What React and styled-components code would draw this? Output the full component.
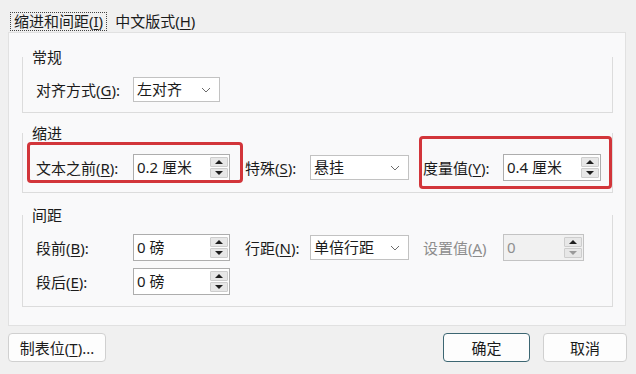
import React from 'react';
import styled, { createGlobalStyle } from 'styled-components';

const GlobalStyle = createGlobalStyle`
  html, body {
    margin: 0;
    padding: 0;
    background: #f0f0f0;
  }
  body {
    width: 636px;
    height: 374px;
    overflow: hidden;
    font-family: "Noto Sans", "Noto Sans CJK SC", sans-serif;
    font-size: 15px;
    color: #1b1b1b;
  }
  u {
    text-underline-offset: 2px;
  }
`;

const Dialog = styled.div`
  display: flex;
  flex-direction: column;
  width: 636px;
  height: 374px;
  box-sizing: border-box;
`;

const TabBar = styled.div`
  display: flex;
  align-items: flex-start;
  height: 32px;
  box-sizing: border-box;
  padding: 12px 0 0 10px;
`;

const Tab = styled.div`
  height: 19px;
  box-sizing: border-box;
  padding: 0 3px;
  margin-right: 4px;
  line-height: 16px;
  border: 1px ${p => (p.$active ? 'dotted #444' : 'solid transparent')};
  white-space: nowrap;
`;

const Panel = styled.div`
  display: flex;
  flex-direction: column;
  margin: 0 10px 0 8px;
  border: 1px solid #e1e1e1;
  background: #f9f9fa;
  padding: 24px 12px 18px 13px;
`;

const Group = styled.section`
  display: flex;
  flex-direction: column;
  margin-top: ${p => p.$top || 0}px;
  border: 1px solid #dcdcdc;
  border-top: none;
  padding-bottom: ${p => p.$bottom}px;
`;

const Legend = styled.div`
  align-self: flex-start;
  margin: -8px 0 0 9px;
  line-height: 16px;
`;

const Row = styled.div`
  display: grid;
  grid-template-columns: 97px 112px 65px 113px 80px 1fr;
  align-items: center;
  margin: ${p => p.$top}px 0 0 13px;
`;

const Label = styled.span`
  white-space: nowrap;
  line-height: 20px;
  color: ${p => (p.$disabled ? '#8d8d8d' : '#1b1b1b')};
`;

const Highlight = styled.div`
  grid-column: span 2;
  display: grid;
  grid-template-columns: ${p => p.$label}px 1fr;
  align-items: center;
  position: relative;

  &::after {
    content: '';
    position: absolute;
    top: ${p => p.$box[0]}px;
    right: ${p => p.$box[1]}px;
    bottom: ${p => p.$box[2]}px;
    left: ${p => p.$box[3]}px;
    border: 3px solid #d2353a;
    border-radius: 4px;
    pointer-events: none;
  }
`;

const SpinBox = styled.div`
  display: flex;
  width: ${p => p.$w}px;
  height: 27px;
  box-sizing: border-box;
  border: 1px solid ${p => (p.$disabled ? '#c3c3c3' : '#adadad')};
  background: ${p => (p.$disabled ? '#f1f1f1' : '#ffffff')};
`;

const SpinValue = styled.span`
  flex: 1;
  padding-left: 3px;
  line-height: 25px;
  color: ${p => (p.$disabled ? '#8f8f8f' : '#1b1b1b')};
  white-space: nowrap;
`;

const Arrows = styled.div`
  display: flex;
  flex-direction: column;
  width: 18px;
  padding: 2px 1px 2px 0;
  gap: 1px;
`;

const ArrowBtn = styled.div`
  flex: 1;
  display: flex;
  align-items: center;
  justify-content: center;
  background: #e7e7e7;
  border: 1px solid #cdcdcd;
  border-radius: 1px;

  &::before {
    content: '';
    width: 0;
    height: 0;
    border-left: 4px solid transparent;
    border-right: 4px solid transparent;
    ${p =>
      p.$down
        ? `border-top: 4px solid ${p.$dim ? '#9a9a9a' : '#1e1e1e'};`
        : `border-bottom: 4px solid #1e1e1e;`}
  }
`;

const SelectBox = styled.div`
  display: flex;
  align-items: center;
  width: ${p => p.$w}px;
  height: 25px;
  box-sizing: border-box;
  border: 1px solid #c2c2c2;
  background: #ffffff;
`;

const SelectValue = styled.span`
  flex: 1;
  padding-left: 3px;
  line-height: 23px;
  white-space: nowrap;
`;

const Chevron = styled.div`
  display: flex;
  align-items: center;
  justify-content: center;
  width: 26px;
  height: 100%;
`;

const Footer = styled.div`
  display: flex;
  justify-content: space-between;
  padding: 7px 9px 0 8px;
`;

const Buttons = styled.div`
  display: flex;
  gap: 13px;
`;

const Button = styled.button`
  width: ${p => p.$w}px;
  height: 29px;
  box-sizing: border-box;
  border: 1px solid ${p => (p.$primary ? '#3c6672' : '#d0d0d0')};
  border-radius: 4px;
  background: #fdfdfd;
  font: inherit;
  color: #1b1b1b;
  line-height: 20px;
  padding: 0;
`;

const Spin = ({ w, value, disabled }) => (
  <SpinBox $w={w} $disabled={disabled}>
    <SpinValue $disabled={disabled}>{value}</SpinValue>
    <Arrows>
      <ArrowBtn />
      <ArrowBtn $down $dim={disabled} />
    </Arrows>
  </SpinBox>
);

const Select = ({ w, value }) => (
  <SelectBox $w={w}>
    <SelectValue>{value}</SelectValue>
    <Chevron>
      <svg width="10" height="6" viewBox="0 0 10 6">
        <path d="M1 1 L5 5 L9 1" fill="none" stroke="#6b6b6b" strokeWidth="1" />
      </svg>
    </Chevron>
  </SelectBox>
);

export default function App() {
  return (
    <Dialog>
      <GlobalStyle />
      <TabBar>
        <Tab $active>
          缩进和间距(<u>I</u>)
        </Tab>
        <Tab>
          中文版式(<u>H</u>)
        </Tab>
      </TabBar>

      <Panel>
        <Group $bottom={10}>
          <Legend>常规</Legend>
          <Row $top={12}>
            <Label>
              对齐方式(<u>G</u>):
            </Label>
            <Select w={87} value="左对齐" />
          </Row>
        </Group>

        <Group $top={20} $bottom={11}>
          <Legend>缩进</Legend>
          <Row $top={13}>
            <Highlight $label={97} $box={[-12, 2, -2, -9]}>
              <Label>
                文本之前(<u>R</u>):
              </Label>
              <Spin w={97} value="0.2 厘米" />
            </Highlight>
            <Label>
              特殊(<u>S</u>):
            </Label>
            <Select w={99} value="悬挂" />
            <Highlight $label={80} $box={[-18, 0, -8, -4]}>
              <Label>
                度量值(<u>Y</u>):
              </Label>
              <Spin w={98} value="0.4 厘米" />
            </Highlight>
          </Row>
        </Group>

        <Group $top={22} $bottom={11}>
          <Legend>间距</Legend>
          <Row $top={11}>
            <Label>
              段前(<u>B</u>):
            </Label>
            <Spin w={97} value="0 磅" />
            <Label>
              行距(<u>N</u>):
            </Label>
            <Select w={99} value="单倍行距" />
            <Label $disabled>
              设置值(<u>A</u>)
            </Label>
            <Spin w={81} value="0" disabled />
          </Row>
          <Row $top={7}>
            <Label>
              段后(<u>E</u>):
            </Label>
            <Spin w={97} value="0 磅" />
          </Row>
        </Group>
      </Panel>

      <Footer>
        <Button $w={98}>
          制表位(<u>T</u>)...
        </Button>
        <Buttons>
          <Button $w={87} $primary>
            确定
          </Button>
          <Button $w={84}>取消</Button>
        </Buttons>
      </Footer>
    </Dialog>
  );
}
